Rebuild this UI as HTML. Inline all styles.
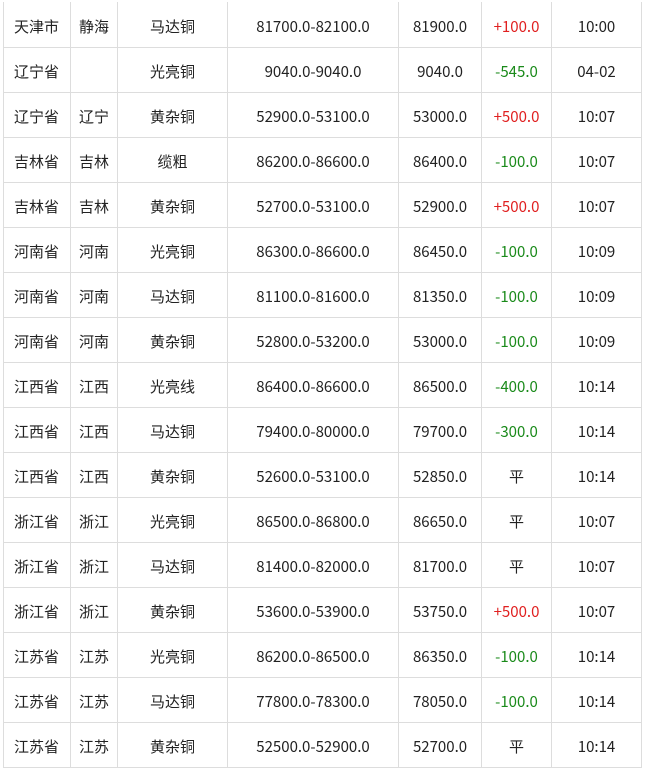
<!DOCTYPE html>
<html><head><meta charset="utf-8"><style>
body{margin:0;background:#fff;width:645px;height:770px;overflow:hidden;font-family:"Noto Sans CJK SC","Liberation Sans",sans-serif;font-size:15px;color:#222}
table{position:absolute;left:3px;top:2px;border-collapse:collapse;table-layout:fixed}
tr{height:45px}
td{border:1.5px solid #ddd;padding:5px 0 0 0;text-align:center;white-space:nowrap;line-height:20px}
tr:first-child td{border-top:none}
td.l{text-align:left;padding-left:10px}
.r{color:#e02020}.g{color:#1a8a1a}
</style></head><body>
<table>
<colgroup><col style="width:67px"><col style="width:47px"><col style="width:110px"><col style="width:171px"><col style="width:83px"><col style="width:70px"><col style="width:90px"></colgroup>
<tr><td class="l">天津市</td><td>静海</td><td>马达铜</td><td>81700.0-82100.0</td><td>81900.0</td><td class="r">+100.0</td><td>10:00</td></tr>
<tr><td class="l">辽宁省</td><td></td><td>光亮铜</td><td>9040.0-9040.0</td><td>9040.0</td><td class="g">-545.0</td><td>04-02</td></tr>
<tr><td class="l">辽宁省</td><td>辽宁</td><td>黄杂铜</td><td>52900.0-53100.0</td><td>53000.0</td><td class="r">+500.0</td><td>10:07</td></tr>
<tr><td class="l">吉林省</td><td>吉林</td><td>缆粗</td><td>86200.0-86600.0</td><td>86400.0</td><td class="g">-100.0</td><td>10:07</td></tr>
<tr><td class="l">吉林省</td><td>吉林</td><td>黄杂铜</td><td>52700.0-53100.0</td><td>52900.0</td><td class="r">+500.0</td><td>10:07</td></tr>
<tr><td class="l">河南省</td><td>河南</td><td>光亮铜</td><td>86300.0-86600.0</td><td>86450.0</td><td class="g">-100.0</td><td>10:09</td></tr>
<tr><td class="l">河南省</td><td>河南</td><td>马达铜</td><td>81100.0-81600.0</td><td>81350.0</td><td class="g">-100.0</td><td>10:09</td></tr>
<tr><td class="l">河南省</td><td>河南</td><td>黄杂铜</td><td>52800.0-53200.0</td><td>53000.0</td><td class="g">-100.0</td><td>10:09</td></tr>
<tr><td class="l">江西省</td><td>江西</td><td>光亮线</td><td>86400.0-86600.0</td><td>86500.0</td><td class="g">-400.0</td><td>10:14</td></tr>
<tr><td class="l">江西省</td><td>江西</td><td>马达铜</td><td>79400.0-80000.0</td><td>79700.0</td><td class="g">-300.0</td><td>10:14</td></tr>
<tr><td class="l">江西省</td><td>江西</td><td>黄杂铜</td><td>52600.0-53100.0</td><td>52850.0</td><td>平</td><td>10:14</td></tr>
<tr><td class="l">浙江省</td><td>浙江</td><td>光亮铜</td><td>86500.0-86800.0</td><td>86650.0</td><td>平</td><td>10:07</td></tr>
<tr><td class="l">浙江省</td><td>浙江</td><td>马达铜</td><td>81400.0-82000.0</td><td>81700.0</td><td>平</td><td>10:07</td></tr>
<tr><td class="l">浙江省</td><td>浙江</td><td>黄杂铜</td><td>53600.0-53900.0</td><td>53750.0</td><td class="r">+500.0</td><td>10:07</td></tr>
<tr><td class="l">江苏省</td><td>江苏</td><td>光亮铜</td><td>86200.0-86500.0</td><td>86350.0</td><td class="g">-100.0</td><td>10:14</td></tr>
<tr><td class="l">江苏省</td><td>江苏</td><td>马达铜</td><td>77800.0-78300.0</td><td>78050.0</td><td class="g">-100.0</td><td>10:14</td></tr>
<tr><td class="l">江苏省</td><td>江苏</td><td>黄杂铜</td><td>52500.0-52900.0</td><td>52700.0</td><td>平</td><td>10:14</td></tr>
</table>
</body></html>
